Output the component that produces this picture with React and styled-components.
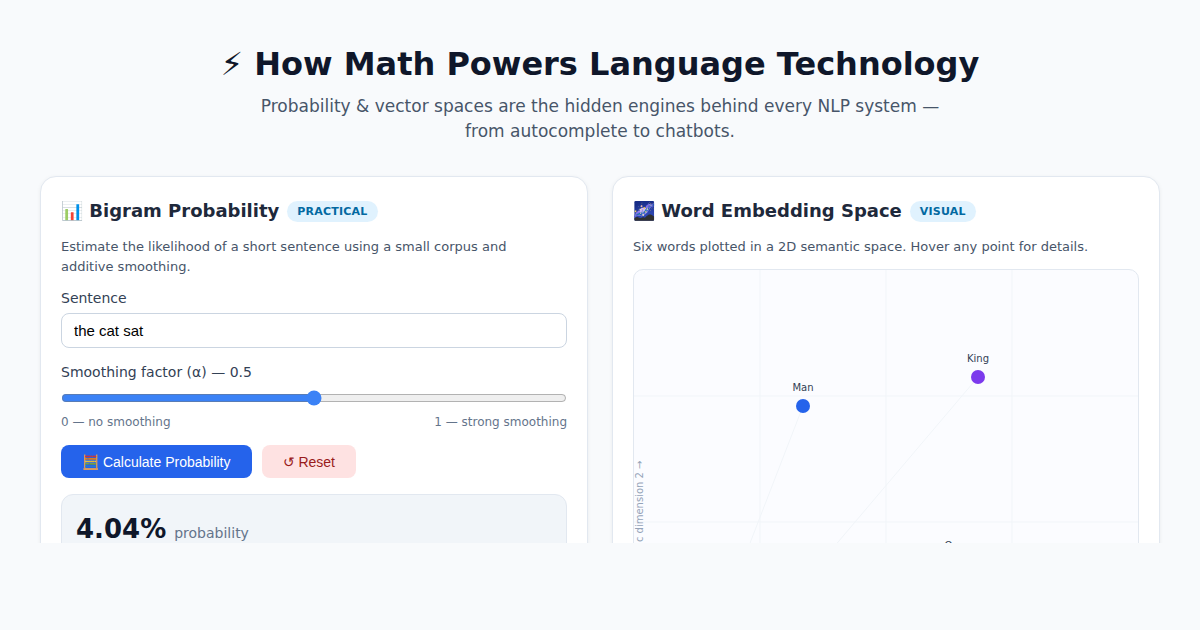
import React, { useState } from "react";
import styled, { createGlobalStyle } from "styled-components";

const PLOT_SIZE = 504;
const ORIGIN = { x: 43, y: 462 };
const GRID_LINES = [126, 252, 378];

const WORDS = [
  { name: "King", x: 344, y: 107, color: "#7c3aed" },
  { name: "Queen", x: 327, y: 294, color: "#db2777" },
  { name: "Man", x: 169, y: 136, color: "#2563eb" },
];

const App = () => {
  const [sentence, setSentence] = useState("the cat sat");
  const [alpha, setAlpha] = useState(0.5);

  const handleReset = () => {
    setSentence("the cat sat");
    setAlpha(0.5);
  };

  return (
    <>
      <GlobalStyle />
      <Page>
        <Header>
          <Title>⚡ How Math Powers Language Technology</Title>
          <Subtitle>
            Probability &amp; vector spaces are the hidden engines behind every
            NLP system — from autocomplete to chatbots.
          </Subtitle>
        </Header>

        <Cards>
          {/* bigram calculator */}
          <Card>
            <CardTitle>
              📊 Bigram Probability <Badge>PRACTICAL</Badge>
            </CardTitle>
            <Description>
              Estimate the likelihood of a short sentence using a small corpus
              and additive smoothing.
            </Description>

            <Label htmlFor="sentence">Sentence</Label>
            <TextInput
              id="sentence"
              type="text"
              value={sentence}
              onChange={(e) => setSentence(e.target.value)}
            />

            <Label htmlFor="alpha">Smoothing factor (α) — {alpha}</Label>
            <Slider
              id="alpha"
              type="range"
              min="0"
              max="1"
              step="0.1"
              value={alpha}
              onChange={(e) => setAlpha(Number(e.target.value))}
            />
            <RangeHints>
              <span>0 — no smoothing</span>
              <span>1 — strong smoothing</span>
            </RangeHints>

            <Actions>
              <Button type="button">🧮 Calculate Probability</Button>
              <Button type="button" $danger onClick={handleReset}>
                ↺ Reset
              </Button>
            </Actions>

            <Result>
              <ResultValue>4.04%</ResultValue>
              <ResultUnit>probability</ResultUnit>
            </Result>
          </Card>

          {/* embedding plot */}
          <Card>
            <CardTitle>
              🌌 Word Embedding Space <Badge>VISUAL</Badge>
            </CardTitle>
            <Description>
              Six words plotted in a 2D semantic space. Hover any point for
              details.
            </Description>
            <Plot viewBox={`0 0 ${PLOT_SIZE} ${PLOT_SIZE}`}>
              {GRID_LINES.map((pos) => (
                <g key={pos} stroke="#f1f5f9" strokeWidth="1">
                  <line x1={pos} y1="0" x2={pos} y2={PLOT_SIZE} />
                  <line x1="0" y1={pos} x2={PLOT_SIZE} y2={pos} />
                </g>
              ))}
              {WORDS.map((word) => (
                <line
                  key={word.name}
                  x1={ORIGIN.x}
                  y1={ORIGIN.y}
                  x2={word.x}
                  y2={word.y}
                  stroke="#f1f5f9"
                />
              ))}
              {WORDS.map((word) => (
                <g key={word.name}>
                  <circle cx={word.x} cy={word.y} r="7" fill={word.color} />
                  <PointLabel x={word.x} y={word.y - 15}>
                    {word.name}
                  </PointLabel>
                </g>
              ))}
              <AxisLabel transform="translate(9 252) rotate(-90)">
                Semantic dimension 2 →
              </AxisLabel>
            </Plot>
          </Card>
        </Cards>
      </Page>
    </>
  );
};

const GlobalStyle = createGlobalStyle`
  * {
    box-sizing: border-box;
  }

  body {
    margin: 0;
    background: #f8fafc;
    color: #1e293b;
    font-family: "DejaVu Sans", sans-serif;
  }
`;

const Page = styled.main`
  max-height: calc(100vh - 87px);
  padding: 40px 40px 0;
  overflow: hidden;
`;

const Header = styled.header`
  display: flex;
  flex-direction: column;
  align-items: center;
  margin-bottom: 32px;
  text-align: center;
`;

const Title = styled.h1`
  margin: 0 0 6px;
  color: #0f172a;
  font-size: 32px;
  font-weight: 700;
  line-height: 48px;
`;

const Subtitle = styled.p`
  max-width: 700px;
  margin: 0;
  color: #475569;
  font-size: 17px;
  line-height: 25px;
`;

const Cards = styled.div`
  display: grid;
  grid-template-columns: 1fr 1fr;
  gap: 24px;
`;

const Card = styled.section`
  padding: 20px;
  background: #ffffff;
  border: 1px solid #e2e8f0;
  border-radius: 16px;
  box-shadow: 0 1px 4px rgba(15, 23, 42, 0.06);
`;

const CardTitle = styled.h2`
  display: flex;
  align-items: center;
  gap: 8px;
  margin: 0 0 12px;
  font-size: 18px;
  line-height: 28px;
`;

const Badge = styled.span`
  padding: 0 10px;
  background: #e0f2fe;
  border-radius: 20px;
  color: #0369a1;
  font-size: 11px;
  letter-spacing: 0.02em;
  line-height: 21px;
`;

const Description = styled.p`
  max-width: 496px;
  margin: 0 0 12px;
  color: #475569;
  font-size: 13px;
  line-height: 20px;
`;

const Label = styled.label`
  display: block;
  margin-bottom: 6px;
  color: #334155;
  font-size: 14px;
  line-height: 18px;
`;

const TextInput = styled.input`
  display: block;
  width: 100%;
  height: 35px;
  margin-bottom: 15px;
  padding: 0 12px;
  background: #ffffff;
  border: 1px solid #cbd5e1;
  border-radius: 8px;
  color: #000000;
  font-family: "Liberation Sans", Arial, sans-serif;
  font-size: 15px;
`;

const Slider = styled.input`
  display: block;
  width: 100%;
  margin: 9px 0 8px;
  accent-color: #3b82f6;
`;

const RangeHints = styled.div`
  display: flex;
  justify-content: space-between;
  margin-bottom: 15px;
  color: #64748b;
  font-size: 12px;
  line-height: 16px;
`;

const Actions = styled.div`
  display: flex;
  gap: 10px;
  margin-bottom: 16px;
`;

const Button = styled.button`
  height: 33px;
  padding: 0 21px;
  background: ${({ $danger }) => ($danger ? "#fee2e2" : "#2563eb")};
  border: none;
  border-radius: 8px;
  color: ${({ $danger }) => ($danger ? "#991b1b" : "#ffffff")};
  font-family: "Liberation Sans", Arial, sans-serif;
  font-size: 14px;
  cursor: pointer;
`;

const Result = styled.div`
  display: flex;
  align-items: baseline;
  gap: 8px;
  padding: 14px;
  background: #f1f5f9;
  border: 1px solid #e2e8f0;
  border-radius: 12px;
`;

const ResultValue = styled.strong`
  color: #0f172a;
  font-size: 26px;
  line-height: 40px;
`;

const ResultUnit = styled.span`
  color: #64748b;
  font-size: 14px;
`;

const Plot = styled.svg`
  display: block;
  width: 100%;
  background: #fbfcff;
  border: 1px solid #e2e8f0;
  border-radius: 10px;
`;

const PointLabel = styled.text`
  fill: #334155;
  font-size: 10px;
  text-anchor: middle;
`;

const AxisLabel = styled.text`
  fill: #94a3b8;
  font-size: 10px;
  text-anchor: middle;
`;

export default App;
